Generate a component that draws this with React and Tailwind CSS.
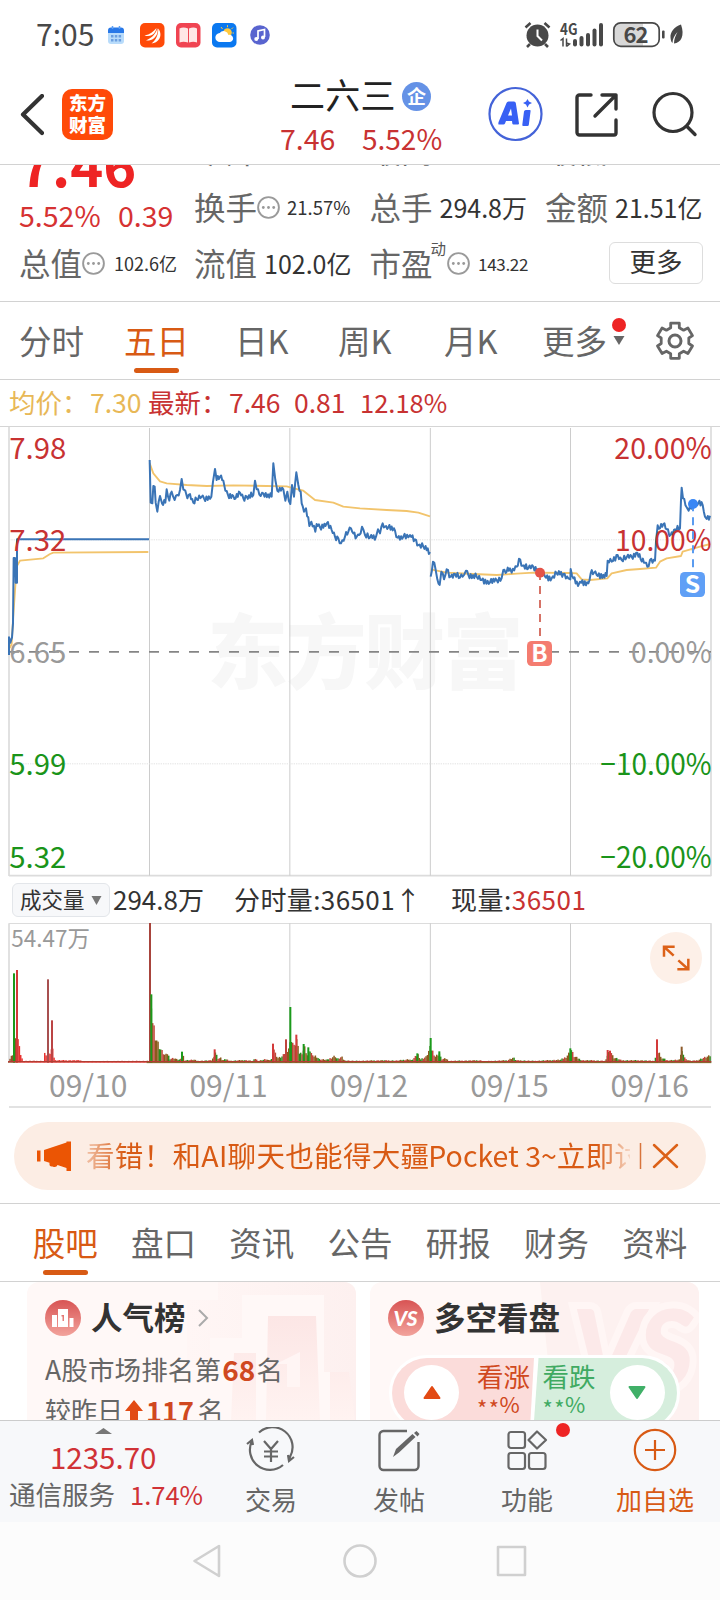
import React from "react";

const price = [
  [[27,705],[27,652],[31,668],[36,652],[39,610],[41,414],[45,414],[47,488],[51,488],[51,358],[447,358]],
  [[449,120],[452,248],[457,250],[460,198],[464,200],[467,248],[472,275],[476,245],[480,228],[486,250],[496,248],[500,208],[508,242],[515,215],[524,240],[532,225],[540,210],[545,177],[550,208],[556,212],[562,235],[570,222],[580,248],[590,238],[605,230],[612,235],[634,230],[639,185],[645,147],[650,180],[660,170],[670,182],[676,212],[684,225],[700,228],[707,235],[720,218],[730,235],[740,230],[760,225],[765,182],[770,208],[782,228],[790,220],[815,230],[820,130],[826,180],[832,212],[850,208],[856,242],[862,215],[871,252],[876,195],[882,230],[889,157],[895,195],[902,215],[905,250],[912,275],[918,265],[928,318],[934,305],[946,335],[950,312],[960,322],[980,310],[995,330],[1005,350],[1015,355],[1023,370],[1035,350],[1045,335],[1053,325],[1060,340],[1070,350],[1078,345],[1086,320],[1095,345],[1110,353],[1128,350],[1134,328],[1140,340],[1148,310],[1155,320],[1165,322],[1185,332],[1193,353],[1210,350],[1225,352],[1230,345],[1245,358],[1255,375],[1270,380],[1290,396]],
  [[1292,470],[1299,425],[1307,450],[1312,478],[1319,495],[1324,455],[1332,478],[1340,448],[1352,470],[1365,462],[1380,473],[1392,465],[1398,452],[1405,465],[1430,470],[1445,480],[1470,487],[1490,480],[1505,474],[1510,450],[1520,455],[1530,445],[1535,458],[1550,440],[1557,416],[1568,437],[1585,445],[1600,440],[1620,455],[1635,470],[1655,475],[1670,460],[1690,462],[1705,475],[1711,478],[1712,447],[1720,475],[1734,498],[1740,485],[1765,490],[1772,460],[1782,458],[1790,465],[1820,468],[1823,422],[1835,425],[1853,405],[1865,420],[1880,412],[1895,410],[1912,398],[1922,418],[1935,428],[1942,440],[1950,420],[1965,422],[1968,365],[1973,316],[1980,325],[1990,312],[2000,328],[2012,345],[2025,328],[2040,325],[2043,240],[2045,203],[2049,235],[2060,262],[2066,272],[2078,250],[2095,250],[2108,255],[2115,290],[2120,297],[2130,287]],
];
const average = [
  "29,684 35,672 39,600 50,440 60,422 130,415 150,402 160,398 445,396",
  "449,130 460,160 480,184 500,190 560,195 620,198 700,196 800,198 860,199 885,206 910,212 945,240 1000,248 1030,260 1080,265 1160,270 1220,273 1255,278 1290,289",
  "1292,448 1340,458 1420,462 1490,465 1550,461 1600,458 1710,459 1730,460 1745,478 1770,480 1822,475 1835,460 1880,450 1920,447 1968,443 1980,425 2000,415 2043,408 2048,395 2100,380 2131,372",
];

// Adds small intraday ticks between the recorded turning points.
function detail(points, index) {
  if (index === 0) return points.map((p) => p.join(",")).join(" ");
  const out = [];
  let k = 0;
  for (let i = 0; i < points.length - 1; i++) {
    const [x0, y0] = points[i];
    const [x1, y1] = points[i + 1];
    out.push(`${x0},${y0}`);
    const n = Math.floor((x1 - x0) / 3.2);
    for (let j = 1; j < n; j++) {
      k++;
      const t = j / n;
      const tick = (k % 2 ? 1 : -1) * (2.5 + ((k * 7) % 5) * 1.6);
      out.push(`${(x0 + (x1 - x0) * t).toFixed(1)},${(y0 + (y1 - y0) * t + tick).toFixed(1)}`);
    }
  }
  out.push(points[points.length - 1].join(","));
  return out.join(" ");
}

// Volume envelopes: [x, height] in chart units.
const envelope = [
  [24,6],[36,30],[40,70],[46,78],[52,80],[57,42],[63,16],[68,6],[130,6],[133,42],[138,20],[150,36],[156,60],[161,8],[238,8],[244,5],[444,6],[446,180],[456,150],[464,95],[474,60],[482,42],[494,24],[500,32],[508,14],[522,16],[530,10],[542,12],[546,32],[551,8],[580,10],[590,6],[634,8],[640,25],[645,40],[650,15],[660,16],[666,8],[676,12],[690,6],[730,9],[756,6],[764,14],[772,6],[796,12],[804,8],[816,14],[819,52],[824,32],[832,16],[846,22],[856,40],[866,55],[872,85],[880,55],[888,80],[894,35],[902,32],[912,52],[920,26],[928,44],[936,22],[946,24],[956,12],[980,10],[1003,24],[1010,12],[1023,20],[1030,8],[1060,6],[1145,8],[1190,7],[1226,12],[1232,8],[1252,28],[1260,12],[1276,20],[1288,50],[1294,44],[1304,22],[1316,32],[1322,12],[1336,14],[1345,6],[1438,8],[1450,5],[1520,8],[1538,18],[1546,8],[1600,6],[1680,10],[1696,20],[1712,44],[1720,22],[1734,14],[1745,8],[1774,8],[1815,6],[1822,34],[1831,38],[1838,18],[1850,14],[1862,8],[1917,8],[1960,6],[1968,30],[1974,44],[1980,18],[2000,8],[2036,10],[2042,40],[2048,34],[2054,12],[2070,6],[2090,8],[2106,16],[2124,22],[2131,26]
];
const spikes = [
  [42,268,"#1b9a1b"],[51,278,"#d33a3a"],[144,250,"#a85050"],[156,127,"#b44"],[450,419,"#a8443c"],[454,205,"#1b9a1b"],[546,33,"#1b9a1b"],[644,40,"#d33a3a"],[819,57,"#d33a3a"],[858,70,"#c0443c"],[871,167,"#1b9a1b"],[889,84,"#d33a3a"],[911,56,"#1b9a1b"],[925,46,"#1b9a1b"],[1252,28,"#1b9a1b"],[1292,74,"#1b9a1b"],[1318,34,"#1b9a1b"],[1823,38,"#d33a3a"],[1830,36,"#d33a3a"],[1711,43,"#1b9a1b"],[1971,70,"#d33a3a"],[2045,48,"#8d5a2a"],
];
function volumeBars() {
  const bars = [];
  let s = 0;
  for (let x = 24, i = 0; x < 2131; x += 4, i++) {
    while (s < envelope.length - 2 && envelope[s + 1][0] < x) s++;
    const [x0, h0] = envelope[s];
    const [x1, h1] = envelope[s + 1];
    const t = Math.max(0, Math.min(1, (x - x0) / (x1 - x0)));
    const h = (h0 + (h1 - h0) * t) * (0.7 + ((i * 37) % 11) / 33);
    const early = x < 440;
    const r = (i * 13) % 7;
    const fill = early ? (x < 50 ? "#93502a" : "#e8322f") : r < 3 ? "#8a5a1c" : r < 5 ? "#c1463a" : "#2c8c1c";
    bars.push(<rect key={x} x={x} y={578 - h} width="4.4" height={h} fill={fill} />);
  }
  return bars;
}

const Dots = () => (
  <svg className="size-[23px] shrink-0" viewBox="0 0 23 23">
    <circle cx="11.5" cy="11.5" r="10.4" fill="none" stroke="#9a9a9a" strokeWidth="1.9" />
    <g fill="#999"><circle cx="6.3" cy="11.5" r="1.4" /><circle cx="11.5" cy="11.5" r="1.4" /><circle cx="16.7" cy="11.5" r="1.4" /></g>
  </svg>
);

function StatusBar() {
  return (
    <div className="flex h-[69px] items-center pl-[36px] text-[#484848]">
      <span className="mb-[3px] w-[72px] text-[30px] leading-none">7:05</span>
      <svg className="h-[26px] w-[164px]" viewBox="0 0 164 26">
        <rect x="0" y="7" width="16" height="15" rx="3" fill="#b9dcfb" />
        <path d="M0 11V8.500a3 3 0 0 1 3-3h10a3 3 0 0 1 3 3V11Z" fill="#2878e8" />
        <path d="M4.500 4v3M11.500 4v3" stroke="#5ba0f5" strokeWidth="1.500" />
        <g fill="#6c9fe0"><rect x="3" y="13" width="2.500" height="2.500" /><rect x="6.800" y="13" width="2.500" height="2.500" /><rect x="10.600" y="13" width="2.500" height="2.500" /><rect x="3" y="17" width="2.500" height="2.500" /><rect x="6.800" y="17" width="2.500" height="2.500" /><rect x="10.600" y="17" width="2.500" height="2.500" /></g>
        <rect x="32" y="1" width="24.500" height="24.500" rx="5" fill="#ff4a08" />
        <path d="M36.500 13.500C42 12.500 45.500 9.500 48.500 6c-.5 3-2 5.500-4.500 7-2 1.200-5 1.500-7.500.500ZM38 18.500C44.500 15.500 48 11.500 49.300 6.300c1 4-.5 7.500-3 9.700-2.300 2-5.300 2.700-8.300 2.500ZM43.500 21.500C48.500 17.500 50.500 12 50.200 6.500c2.600 3.300 3 7.500 1 10.500-1.700 2.700-4.700 4.300-7.700 4.500Z" fill="#fff" />
        <rect x="68" y="1" width="24.500" height="24.500" rx="5" fill="#f04452" />
        <path d="M71.500 6.500c3-1.500 6-1 8.500 0v14c-3-1-6-1-8.500 0ZM81 6.500c2.500-1 5.500-1.500 8 0v14c-2.500-1-5-1-8 0Z" fill="#ffe6e6" />
        <rect x="104" y="1" width="24.500" height="24.500" rx="5" fill="#0a78f0" />
        <circle cx="119.500" cy="10.500" r="4.300" fill="#ffc83c" />
        <path d="M113 5l1.500 2M119.500 3.200v2M125 5.500l-1.500 1.500M126 11h-1.500" stroke="#ffc83c" strokeWidth="1" />
        <path d="M112 20a4.500 4.500 0 0 1-.300-9 5 5 0 0 1 8.800 2 3.600 3.600 0 1 1 .500 7Z" fill="#fff" />
        <circle cx="152" cy="13" r="9.800" fill="#5964cf" />
        <path d="M150 17V9l6.500-1.500V15" fill="none" stroke="#fff" strokeWidth="1.700" /><circle cx="148.300" cy="17" r="2" fill="#fff" /><circle cx="155" cy="15.500" r="2" fill="#fff" />
      </svg>
      <svg className="ml-[252px] h-[30px] w-[162px]" viewBox="0 0 162 30">
        <circle cx="13.500" cy="15.500" r="11" fill="#484848" />
        <path d="M1.500 7.500 6.500 3M20.500 3l5 4.500M6 24l-3 3M21 24l3 3" stroke="#484848" strokeWidth="2.600" />
        <path d="M13.500 9.500V16l4.500 4.500" fill="none" stroke="#fff" strokeWidth="2" />
        <text x="36" y="14.500" fontSize="15.500" fontWeight="700" fill="#484848" textLength="17.500" lengthAdjust="spacingAndGlyphs">4G</text>
        <path d="M36.500 20.500l2.500-2v8M42.500 18.500v8M42.500 26.500l3-2.500-3-1" fill="none" stroke="#484848" strokeWidth="1.500" />
        <g fill="#484848"><rect x="49" y="19" width="4" height="7.500" rx="2" /><rect x="55.500" y="16" width="4" height="10.500" rx="2" /><rect x="62" y="13" width="4" height="13.500" rx="2" /><rect x="68.500" y="8.500" width="4" height="18" rx="2" /><rect x="75" y="3" width="4" height="23.500" rx="2" /></g>
        <path d="M97 3h14v23H97q-6-1-7-7V9q1-5 7-6Z" fill="#d8d8d8" /><path d="M110 3h9v23h-9Z" fill="#d8d8d8" />
        <rect x="89.800" y="2.800" width="45.400" height="23.500" rx="7" fill="none" stroke="#484848" strokeWidth="1.700" />
        <text x="99.500" y="22.500" fontSize="22" fontWeight="600" fill="#484848" textLength="25">62</text>
        <rect x="138" y="10.500" width="2.600" height="8" rx="1" fill="#484848" />
        <path d="M157 4.500c-7 2-11 8-10.500 13 .200 3 1 5 2 5.500 0-4 2-8 5-11-2 4-3.500 7-3.500 11.500 7-.500 11-8 7-19Z" fill="#484848" />
      </svg>
    </div>
  );
}

function Header() {
  return (
    <header className="flex h-[96px] border-b border-[#d2d2d2] pl-[20px]">
      <svg className="mt-[25px] h-[42px] w-[24px]" viewBox="0 0 24 42"><path d="M22 2 3 20.500 22 39" fill="none" stroke="#333" strokeWidth="4.200" strokeLinecap="round" strokeLinejoin="round" /></svg>
      <div className="ml-[18px] mt-[20px] flex size-[51px] flex-col items-center justify-center rounded-[10px] bg-[#ff4a08] pb-[3px] text-[18.500px] font-black leading-[22px] text-white"><span>东方</span><span>财富</span></div>
      <div className="ml-[167px] w-[180px]">
        <div className="flex h-[48px] items-center pl-[10px] text-[#222]">
          <span className="w-[112px] whitespace-nowrap text-[35px] leading-none tracking-[0.2px]">二六三</span>
          <span className="mt-[7px] flex size-[29px] items-center justify-center rounded-full bg-[#6592e6] pb-[3px] text-[19px] font-bold leading-none text-white">企</span>
        </div>
        <div className="flex h-[42px] items-center text-[28.500px] leading-none text-[#c83232]"><span className="w-[82px]">7.46</span><span className="text-[28px]">5.52%</span></div>
      </div>
      <svg className="ml-[30px] mt-[16px] h-[58px] w-[214px] overflow-visible" viewBox="0 0 214 58">
        <circle cx="25.500" cy="29" r="26" fill="#fff" stroke="#4463d8" strokeWidth="2.200" />
        <path fillRule="evenodd" d="M8.500 39.500Q8 38 9 36L16.500 18q.5-1.500 2-1.500H24q1.500 0 1.800 1.500L29 38.500q0 1-1 1H23.500q-1 0-1.200-1L22 36h-6l-1 2.500q-.5 1-1.500 1ZM18 30.500h4l-1-7Z" fill="#3860f4" />
        <path d="M34 26.500q.3-1.500 1.800-1.500h4q1 0 .8 1l-1.800 14q-.2 1-1.300 1h-4.200q-1.200 0-1-1.200ZM37.500 14l1.400 2.600L42 18l-3 1.500-1.500 3-1.500-3-3-1.500 3-1.400Z" fill="#3860f4" />
        <path d="M101 10H89.500A2.500 2.500 0 0 0 87 12.500v35A2.500 2.500 0 0 0 89.500 50H124a2 2 0 0 0 2-2V35M112 10h14v14M126 10l-21 21" fill="none" stroke="#333" strokeWidth="3.400" strokeLinecap="round" strokeLinejoin="round" />
        <circle cx="183" cy="27.500" r="19" fill="none" stroke="#333" strokeWidth="3.200" />
        <path d="m197 41.500 8 8" stroke="#333" strokeWidth="3.400" strokeLinecap="round" />
      </svg>
    </header>
  );
}

function Quote() {
  const label = "whitespace-nowrap text-[31.500px] leading-none text-[#666]";
  return (
    <section className="h-[137px] overflow-hidden border-b border-[#d2d2d2]">
      <div className="-mt-[42px] grid grid-cols-[175px_175.500px_175.500px_1fr] grid-rows-[56px_56px_56px] items-center pl-[19px] text-[#333]">
        <div className="row-span-2 flex h-full flex-col">
          <span className="mt-[15px] text-[56px] font-bold leading-[50px] text-[#ee2424]">7.46</span>
          <span className="mt-[12px] flex text-[28.500px] leading-[30px] text-[#d63232]"><span className="w-[99px]">5.52%</span><span>0.39</span></span>
        </div>
        <span className={`${label} mb-[2px]`}>今开</span><span className={`${label} mb-[2px]`}>最高</span><span className={`${label} mb-[2px]`}>最低</span>
        <div className="flex items-center"><span className={label}>换手</span><Dots /><span className="ml-[7px] text-[18.500px] leading-none">21.57%</span></div>
        <div className="flex items-center"><span className={label}>总手</span><span className="ml-[7px] text-[25px] leading-none">294.8万</span></div>
        <div className="flex items-center"><span className={label}>金额</span><span className="ml-[7px] text-[25px] leading-none">21.51亿</span></div>
        <div className="flex items-center"><span className={label}>总值</span><Dots /><span className="ml-[9px] text-[18px] leading-none">102.6亿</span></div>
        <div className="flex items-center"><span className={label}>流值</span><span className="ml-[7px] text-[25px] leading-none">102.0亿</span></div>
        <div className="flex items-center"><span className={label}>市盈</span><span className="-ml-[2px] mb-[28px] text-[15.500px] leading-none text-[#555]">动</span><span className="ml-px"><Dots /></span><span className="ml-[8px] text-[17px] leading-none tracking-[-0.3px]">143.22</span></div>
        <div className="pl-[64px]"><button className="flex h-[42px] w-[94px] items-center justify-center rounded-[6px] border border-[#ddd] pb-[4px] text-[26.500px] leading-none">更多</button></div>
      </div>
    </section>
  );
}

function PeriodTabs() {
  const tabs = [["分时", "w-[105px]"], ["五日", "w-[111px]"], ["日K", "w-[103px]"], ["周K", "w-[106px]"], ["月K", "w-[98px]"]];
  return (
    <nav className="flex h-[78px] border-b border-[#d2d2d2] pl-[19px] text-[32.500px] leading-[75px] text-[#666]">
      {tabs.map(([t, w], i) => (
        <div key={t} className={w}>
          <div className={i === 1 ? "h-[66px] text-[#d85a14]" : "h-[66px]"}>{t}</div>
          {i === 1 && <div className="ml-[10px] h-[5px] w-[45px] rounded-full bg-[#d85a14]" />}
        </div>
      ))}
      <div>更多</div>
      <svg className="ml-[4px] mt-[14px] h-[34px] w-[16px]" viewBox="0 0 16 34"><circle cx="8" cy="9" r="7" fill="#ee2424" /><path d="M2.500 20h11L8 29Z" fill="#666" /></svg>
      <svg className="ml-[28px] mt-[19px] size-[40px]" viewBox="0 0 40 40">
        <path d="M15.700 2.200h8.600v4.500l4.300 2.500 4.300-2.200 4.600 7.600-3.700 2.400v5.500l3.700 2.500-4.600 7.500-4.300-2.300-4.300 2.500v4.600h-8.600v-4.600l-4.300-2.500-4.300 2.300-4.600-7.500 3.700-2.500V17l-3.700-2.400L7.100 7l4.300 2.200 4.300-2.500Z" fill="none" stroke="#666" strokeWidth="2.800" strokeLinejoin="round" />
        <circle cx="20" cy="20" r="6" fill="none" stroke="#666" strokeWidth="3" />
      </svg>
    </nav>
  );
}

function PriceChart() {
  const labels = [
    ["7.98", "#c83232", 117, "20.00%", 1843, 292],
    ["7.32", "#c83232", 393, "10.00%", 1845, 290],
    ["6.65", "#999", 729, "0.00%", 1893, 242],
    ["5.99", "#1a941a", 1065, "−10.00%", 1801, 334],
    ["5.32", "#1a941a", 1344, "−20.00%", 1801, 334],
  ];
  return (
    <svg className="block h-[451px] w-full" viewBox="0 18 2160 1353">
      <text x="622" y="787" fontSize="242" fontWeight="900" fill="#f7f7f7" textLength="948">东方财富</text>
      <g stroke="#d5d5d5" strokeWidth="4" fill="none">
        <path d="M0 19.500H2160" strokeWidth="3" />
        <path d="M27 20V1368M2133 20V1368M27 1367H2134" strokeWidth="5" stroke="#dcdcdc" />
        <path d="M448.500 24V1367M869.500 24V1367M1291 24V1367M1711.500 24V1367" strokeWidth="3" stroke="#ccc" />
        <path d="M27 359.500H2133M27 1031.500H2133" strokeDasharray="4 3" strokeWidth="3" stroke="#e2e2e2" />
      </g>
      <path d="M27 695.500H2133" stroke="#858585" strokeWidth="5" strokeDasharray="30 30" />
      {average.map((p) => <polyline key={p} points={p} fill="none" stroke="#f2c46c" strokeWidth="5.500" strokeLinejoin="round" />)}
      {price.map((p, i) => <polyline key={i} points={detail(p, i)} fill="none" stroke="#3a74b6" strokeWidth="6" strokeLinejoin="round" />)}
      {labels.map(([l, c, y, r, x, w]) => (
        <g key={l} fill={c} fontSize="89">
          <text x="28" y={y} textLength="171" lengthAdjust="spacingAndGlyphs">{l}</text>
          <text x={x} y={y} textLength={w} lengthAdjust="spacingAndGlyphs">{r}</text>
        </g>
      ))}
      <path d="M1620 472V650" stroke="#d67266" strokeWidth="6" strokeDasharray="24 18" strokeDashoffset="-26" />
      <circle cx="1620" cy="458" r="15" fill="#e45348" />
      <rect x="1581" y="663" width="75" height="75" rx="14" fill="#f47c70" />
      <text x="1618.500" y="726" textAnchor="middle" fontSize="72" fontWeight="700" fill="#fff">B</text>
      <path d="M2079 264V443" stroke="#5a9cf0" strokeWidth="6" strokeDasharray="24 18" strokeDashoffset="-28" />
      <circle cx="2079" cy="252" r="15" fill="#3987f5" />
      <rect x="2040" y="456" width="75" height="75" rx="14" fill="#5f9ff6" />
      <text x="2077" y="519" textAnchor="middle" fontSize="74" fontWeight="700" fill="#fff">S</text>
    </svg>
  );
}

function Volume() {
  return (
    <section>
      <div className="flex h-[46px] items-center pb-[2px] pl-[12px] text-[26px] leading-none text-[#333]">
        <div className="mt-[2px] flex h-[34px] w-[98px] items-center gap-[6px] rounded-[6px] border border-[#e3e6ea] bg-[#f7f8fa] pb-[3px] pl-[7px] text-[21.500px]">成交量<svg className="mt-[3px] h-[9px] w-[11px]" viewBox="0 0 10 9"><path d="M0 0h10L5 9Z" fill="#777" /></svg></div>
        <span className="ml-[3px] w-[121px]">294.8万</span>
        <span className="w-[217px] whitespace-nowrap tracking-[0.4px]">分时量:36501↑</span>
        <span className="whitespace-nowrap tracking-[0.5px]">现量:<span className="text-[#c83232]">36501</span></span>
      </div>
      <svg className="block h-[142px] w-full" viewBox="0 159 2160 426">
        <g fill="none" stroke="#ccc" strokeWidth="3">
          <path d="M27 160.500H2134" stroke="#dcdcdc" />
          <path d="M27 160V578M2133 160V578" stroke="#dcdcdc" strokeWidth="5" />
          <path d="M448.500 160V578M869.500 160V578M1291 160V578M1711.500 160V578" />
        </g>
        {volumeBars()}
        {spikes.map(([x, h, c]) => <rect key={x} x={x - 3} y={578 - h} width="6" height={h} fill={c} />)}
        <path d="M24 575H2134" stroke="#b33c32" strokeWidth="3.500" /><path d="M440 578H2134" stroke="#7c5a1c" strokeWidth="2.500" />
        <text x="34" y="232" fontSize="69" fill="#999" textLength="236" lengthAdjust="spacingAndGlyphs">54.47万</text>
        <circle cx="2028" cy="264" r="78" fill="#fdf0e8" />
        <path d="M1992 260V230H2024M1993 231L2021 257M2065 266V298H2032M2064 297L2035 271" fill="none" stroke="#dc6118" strokeWidth="7.500" />
      </svg>
      <div className="mx-[9px] grid h-[43px] grid-cols-5 border-b-2 border-[#e2e2e2] text-center text-[30px] leading-[38px] text-[#999]">
        {["09/10", "09/11", "09/12", "09/15", "09/16"].map((d) => <span key={d} className="pl-[18px]">{d}</span>)}
      </div>
    </section>
  );
}

function Banner() {
  return (
    <div className="flex h-[96px] items-center border-b border-[#d2d2d2] pt-[1px]">
      <div className="ml-[14px] flex h-[68px] w-[692px] items-center rounded-full bg-[#fcede4] pl-[22px] text-[#d85a14]">
        <svg className="h-[32px] w-[36px]" viewBox="0 0 36 32"><path d="M1 10.500h3.500v11H1ZM8 10l22.500-7.500V1.500H35V31h-4.500v-3l-9-3q-1 3-5 1.500-3.500.500-3-3.800L8 21Z" fill="#eb5504" /></svg>
        <div className="mb-[2px] ml-[14px] w-[544px] overflow-hidden whitespace-nowrap text-[28.500px] leading-[44px] tracking-[0.320px] [mask-image:linear-gradient(to_right,rgba(0,0,0,0.300),#000_7%,#000_94%,rgba(0,0,0,0.150)_100%)]">看错！和AI聊天也能得大疆<span className="-ml-px tracking-normal">Pocket 3~</span>立即讨</div>
        <svg className="ml-[8px] h-[32px] w-[42px]" viewBox="0 0 42 32"><path d="M2.500 3v26" stroke="#d8743c" strokeWidth="1.500" /><path d="m16 5 23 22M39 5 16 27" stroke="#dc6118" strokeWidth="2.500" strokeLinecap="round" /></svg>
      </div>
    </div>
  );
}

function ContentTabs() {
  return (
    <nav className="h-[78px] border-b border-[#d2d2d2] px-[16px]">
      <div className="grid grid-cols-7 text-center text-[32.500px] leading-[76px] text-[#666]">
        {["股吧", "盘口", "资讯", "公告", "研报", "财务", "资料"].map((t, i) => (
          <div key={t} className={i ? "h-[66px]" : "h-[66px] text-[#d85a14]"}>{t}{!i && <div className="mx-auto -mt-[10px] h-[5px] w-[45px] rounded-full bg-[#d85a14]" />}</div>
        ))}
      </div>
    </nav>
  );
}

function Cards() {
  return (
    <section className="flex h-[138px] gap-[14px] overflow-hidden pl-[27px]">
      <div className="relative h-[170px] w-[329px] shrink-0 overflow-hidden rounded-[12px] bg-[#fff8f7] pl-[18px] text-[#666]">
        <svg className="absolute left-0 top-0 h-[138px] w-[329px]" viewBox="0 0 329 138">
          <defs><linearGradient id="podium" x2="0" y2="1"><stop stopColor="#fce6e5" /><stop offset="1" stopColor="#fff3f1" /></linearGradient><linearGradient id="glow"><stop stopColor="#fff6f5" /><stop offset="1" stopColor="#fdf0ef" /></linearGradient></defs>
          <path d="M191 0h138v138h-22V90h-10V13h-82v43h-32v30h-23V18h31Z" fill="url(#glow)" />
          <path d="M241 34h48l4 104h-54ZM207 71h22v67h-25ZM303 90h19l6 48h-25Z" fill="url(#podium)" />
          <path d="m249 82 24-12v35h-13V82Z" fill="#fff5f4" />
        </svg>
        <div className="relative flex h-[72px] items-center">
          <svg className="size-[36px]" viewBox="0 0 36 36"><defs><linearGradient id="badge" x2="0" y2="1"><stop stopColor="#d85454" /><stop offset="1" stopColor="#f2a39c" /></linearGradient></defs><circle cx="18" cy="18" r="18" fill="url(#badge)" /><path fillRule="evenodd" d="M13 9h10v18H13ZM7 15h5v12H7ZM24.500 18h4v9h-4ZM16.500 15v1.500h1V21H19v-6Z" fill="#fff" /></svg>
          <span className="mb-[2px] ml-[10px] text-[31.500px] font-bold leading-none text-[#333]">人气榜</span>
          <svg className="ml-[11px] h-[18px] w-[12px]" viewBox="0 0 12 18"><path d="m2 1 8 8-8 8" fill="none" stroke="#aaa" strokeWidth="2" /></svg>
        </div>
        <div className="relative -mt-px flex h-[32px] items-center whitespace-nowrap text-[26.500px] leading-none tracking-[0.150px]">A股市场排名第<b className="ml-px text-[28px] text-[#d04820]">68</b><span className="ml-px">名</span></div>
        <div className="relative mt-[9px] flex h-[32px] items-center whitespace-nowrap text-[26px] leading-none">较昨日<svg className="mx-[2px] h-[20px] w-[18px]" viewBox="0 0 18 20"><path d="m9 0 9 11h-5v9H5v-9H0Z" fill="#e24a14" /></svg><b className="ml-px text-[27px] text-[#d04820]">117</b><span className="ml-[4px]">名</span></div>
      </div>
      <div className="relative h-[170px] w-[329px] shrink-0 overflow-hidden rounded-[12px] bg-[#fff8f7]">
        <svg className="absolute left-0 top-0 h-[138px] w-[329px]" viewBox="0 0 329 138">
          <path d="M170 0h159v138H184Z" fill="#fdf1f0" />
          <text x="202" y="106" fontFamily="Lato" fontSize="108" fontWeight="900" fontStyle="italic" fill="#fce9e9" stroke="#fff6f5" strokeWidth="14" paintOrder="stroke" textLength="122">VS</text>
        </svg>
        <div className="relative flex h-[72px] items-center pl-[18px]">
          <svg className="size-[36px]" viewBox="0 0 36 36"><circle cx="18" cy="18" r="18" fill="url(#badge)" /><text x="5.500" y="25.500" fontFamily="Lato" fontSize="21" fontWeight="900" fontStyle="italic" fill="#fff" textLength="24" lengthAdjust="spacingAndGlyphs">VS</text></svg>
          <span className="mb-[2px] ml-[10px] text-[31.500px] font-bold leading-none text-[#333]">多空看盘</span>
        </div>
        <div className="relative ml-[19px] mt-[1px] flex h-[76px] w-[291px] overflow-hidden rounded-full border-[3px] border-white bg-white">
          <div className="flex w-[145px] bg-[#fbdcda] pl-[12px] [clip-path:polygon(0_0,142px_0,138px_100%,0_100%)]">
            <span className="mt-[7px] flex size-[55px] shrink-0 items-center justify-center rounded-full bg-white"><svg className="h-[15px] w-[18px]" viewBox="0 0 18 15"><path d="M9 2 16.500 13h-15Z" fill="#e24a14" stroke="#e24a14" strokeWidth="2" strokeLinejoin="round" /></svg></span>
            <div className="ml-[18px] mt-[4px] whitespace-nowrap text-[26.500px] leading-[28px] text-[#d04820]"><div>看涨</div><div className="flex text-[22px] leading-[26px]"><span className="pt-[4px] tracking-[1.5px]">**</span><span className="-ml-px">%</span></div></div>
          </div>
          <div className="-ml-[2px] flex w-[145px] bg-[#d6eedd] pl-[9px] [clip-path:polygon(5px_0,100%_0,100%_100%,0_100%)]">
            <div className="mt-[4px] w-[53px] whitespace-nowrap text-[26.500px] leading-[28px] text-[#40aa62]"><div>看跌</div><div className="flex text-[22px] leading-[26px]"><span className="pt-[4px] tracking-[1.5px]">**</span><span className="-ml-px">%</span></div></div>
            <span className="ml-[14px] mt-[7px] flex size-[55px] shrink-0 items-center justify-center rounded-full bg-white"><svg className="h-[15px] w-[18px]" viewBox="0 0 18 15"><path d="M9 13 16.500 2h-15Z" fill="#40b068" stroke="#40b068" strokeWidth="2" strokeLinejoin="round" /></svg></span>
          </div>
        </div>
      </div>
    </section>
  );
}

function ActionBar() {
  const icon = "mx-auto block h-[46px] w-[50px]";
  const cell = "pt-[6px] text-center text-[26px] leading-[51px]";
  return (
    <div className="grid h-[102px] grid-cols-[207px_128px_128px_128px_128px] border-t border-[#ccc] bg-[#f7f8fa] text-[#666]">
      <div className="pt-[7px]">
        <svg className="ml-[95px] h-[6px] w-[17px]" viewBox="0 0 17 6"><path d="M0 6 8.500 0 17 6Z" fill="#777" /></svg>
        <div className="mt-[4px] pl-[50px] text-[29.500px] leading-[36px] text-[#d03236]">1235.70</div>
        <div className="mt-px flex whitespace-nowrap pl-[9px] text-[26.500px] leading-[38px]"><span className="w-[121px]">通信服务</span><span className="text-[25.500px] text-[#d03236]">1.74%</span></div>
      </div>
      <div className={cell}>
        <svg className={icon} viewBox="0 0 50 46" fill="none" stroke="#666" strokeWidth="2.200"><path d="M13 5.500A20 20 0 0 1 44 30l-1 3M37 38A20 20 0 0 1 6 14M1 17l5-4 1 5M42 28l1 6 5-4M18 14l7 8 7-8M25 22v13M18 24.500h14M18 29.500h14" /></svg>交易
      </div>
      <div className={cell}>
        <svg className={icon} viewBox="0 0 50 46" fill="none" stroke="#666" strokeWidth="2.400"><path d="M33 4H9.500A4 4 0 0 0 5.500 8v31a4 4 0 0 0 4 4h31a4 4 0 0 0 4-4V15" /><path d="m19 30 3-8L38.500 7l3 3L25 25.500Z" fill="#666" stroke="none" /><path d="m40 6 2.500-2 3 3-2 2.500Z" fill="#666" stroke="none" /></svg>发帖
      </div>
      <div className={`${cell} relative`}>
        <svg className={icon} viewBox="0 0 50 46" fill="none" stroke="#666" strokeWidth="2.200"><rect x="6.500" y="5" width="16.500" height="16" rx="2.500" /><rect x="6.500" y="26" width="16.500" height="16" rx="2.500" /><rect x="27" y="26" width="16.500" height="16" rx="2.500" /><path d="M35 4.500 44 13l-9 8.500L26.500 13Z" strokeLinejoin="round" /></svg>功能
        <span className="absolute left-[93px] top-[2px] size-[14px] rounded-full bg-[#ee2424]" />
      </div>
      <div className={`${cell} text-[#d85a14]`}>
        <svg className={icon} viewBox="0 0 50 46" fill="none" stroke="#d85a14" strokeWidth="2.200"><circle cx="25" cy="23" r="20.200" /><path d="M15 23h20M25 13v20" /></svg>加自选
      </div>
    </div>
  );
}

export default function App() {
  return (
    <main className="flex h-[1600px] w-[720px] flex-col overflow-hidden bg-white font-['Noto_Sans_CJK_SC',sans-serif]">
      <StatusBar />
      <Header />
      <Quote />
      <PeriodTabs />
      <div className="flex h-[46px] items-center pb-[2px] pl-[9px] text-[26.500px] leading-none text-[#c83232]">
        <span className="w-[81px] whitespace-nowrap text-[#e8b857]">均价：</span><span className="w-[58px] text-[#e8b857]">7.30</span><span className="w-[81px] whitespace-nowrap">最新：</span><span className="w-[65px]">7.46</span><span className="w-[66px]">0.81</span><span className="text-[25.500px]">12.18%</span>
      </div>
      <PriceChart />
      <Volume />
      <Banner />
      <ContentTabs />
      <Cards />
      <ActionBar />
      <footer className="flex h-[78px] items-center justify-center bg-[#fcfcfc]">
        <svg className="ml-[2px] h-[40px] w-[340px]" viewBox="0 0 340 40" fill="none" stroke="#d0d0d0" strokeWidth="2.600" strokeLinejoin="round"><path d="M28 5v30L3.500 20ZM307 6h27v28h-27Z" /><circle cx="169" cy="20" r="15.500" /></svg>
      </footer>
    </main>
  );
}
